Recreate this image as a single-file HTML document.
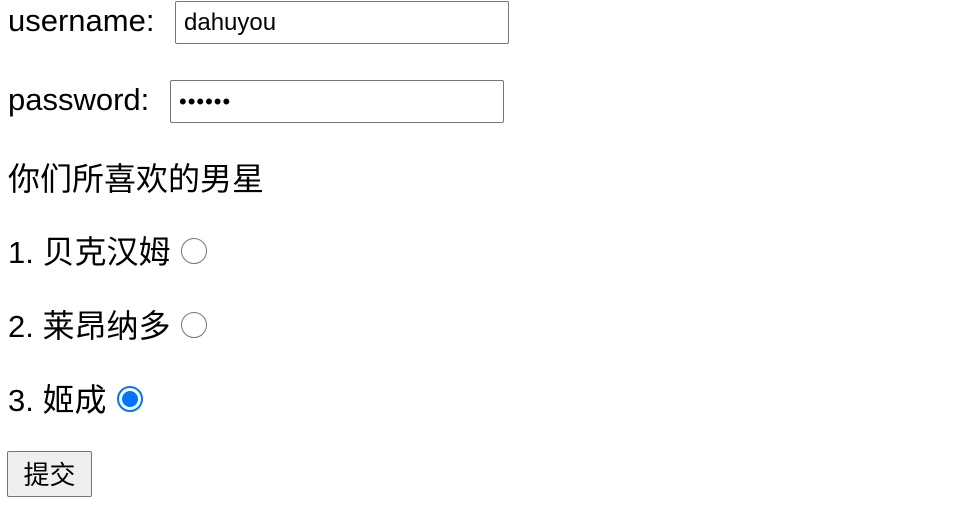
<!DOCTYPE html>
<html><head><meta charset="utf-8"><style>
body{margin:0;width:959px;height:508px;background:#fff;position:relative;font-family:"Liberation Sans","Noto Sans CJK SC",sans-serif;color:#000;overflow:hidden}
.t{position:absolute;left:8px;font-size:31px;line-height:40px;white-space:nowrap}
.c{font-size:32px}
.in{position:absolute;border:1px solid #767676;border-radius:2px;box-sizing:border-box;height:43px;width:334px;font-size:24px;line-height:41px;padding-left:8px}
.r{position:absolute;width:26px;height:26px;box-sizing:border-box;border:1px solid #767676;border-radius:50%;background:#fff}
.r.on{border:2px solid #0075ff}
.r.on::after{content:"";position:absolute;left:3px;top:3px;width:16px;height:16px;border-radius:50%;background:#0075ff}
.btn{position:absolute;left:7px;top:451px;width:85px;height:46px;box-sizing:border-box;border:1px solid #767676;border-radius:2px;background:#efefef;font-size:26px;line-height:46px;text-align:center}
</style></head><body>
<div class="t" style="top:1px">username:</div>
<div class="in" style="left:175px;top:1px">dahuyou</div>
<div class="t" style="top:80px">password:</div>
<div class="in" style="left:170px;top:80px;font-size:22px;letter-spacing:1px">••••••</div>
<div class="t c" style="top:159px">你们所喜欢的男星</div>
<div class="t" style="top:232px">1. <span class="c">贝克汉姆</span></div>
<div class="r" style="left:181px;top:238px"></div>
<div class="t" style="top:306px">2. <span class="c">莱昂纳多</span></div>
<div class="r" style="left:181px;top:312px"></div>
<div class="t" style="top:380px">3. <span class="c">姬成</span></div>
<div class="r on" style="left:117px;top:386px"></div>
<div class="btn">提交</div>
</body></html>
